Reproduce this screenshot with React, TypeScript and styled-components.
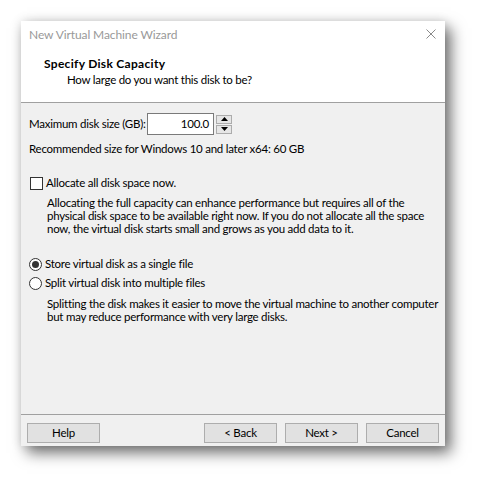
import React from "react";
import styled, { createGlobalStyle } from "styled-components";

const Global = createGlobalStyle`
  html, body { margin: 0; padding: 0; background: #ffffff; }
  body { font-family: Lato, "Noto Sans", sans-serif; font-size: 11.5px; letter-spacing: -0.25px; color: #000; }
`;

const Stage = styled.div`
  padding: 21px 0 0 21px;
  width: 487px;
  height: 489px;
  box-sizing: border-box;
`;

const Dialog = styled.div`
  width: 424px;
  height: 425px;
  background: #f0f0f0;
  display: flex;
  flex-direction: column;
  white-space: nowrap;
  box-shadow: 6px 7px 14px rgba(0, 0, 0, 0.55), 0 0 10px rgba(0, 0, 0, 0.12);
`;

const Header = styled.div`
  background: #ffffff;
  height: 81px;
  border-bottom: 1px solid #a0a0a0;
  display: flex;
  flex-direction: column;
`;

const TitleBar = styled.div`
  display: flex;
  justify-content: space-between;
  align-items: flex-start;
  padding: 6px 9px 0 8px;
  height: 16px;
`;

const Title = styled.div`
  color: #999999;
  font-size: 12px;
  letter-spacing: -0.1px;
  line-height: 16px;
`;

const Close = styled.svg`
  margin-top: 2px;
`;

const Heading = styled.div`
  font-weight: bold;
  font-size: 12px;
  letter-spacing: 0.3px;
  line-height: 16px;
  margin: 13px 0 0 23px;
`;

const SubHeading = styled.div`
  line-height: 16px;
  margin: 0 0 0 46px;
`;

const Body = styled.div`
  flex: 1;
  padding: 10px 8px 0 8px;
  display: flex;
  flex-direction: column;
`;

const SizeRow = styled.div`
  display: flex;
  align-items: center;
  height: 22px;
`;

const Label = styled.span`
  line-height: 16px;
  width: 113px;
  margin-right: 5px;
`;

const NumberBox = styled.div`
  width: 67px;
  height: 22px;
  box-sizing: border-box;
  background: #fff;
  border: 1px solid #7a7a7a;
  text-align: right;
  padding: 2px 4px 0 0;
  line-height: 16px;
`;

const Spinner = styled.div`
  display: flex;
  flex-direction: column;
  gap: 1px;
  margin-left: 2px;
  height: 22px;
  justify-content: center;
`;

const SpinButton = styled.div`
  width: 16px;
  height: 9px;
  box-sizing: border-box;
  background: #e6e6e6;
  border: 1px solid #acacac;
  display: flex;
  align-items: center;
  justify-content: center;
`;

const Text = styled.div<{ $top: number }>`
  line-height: 16px;
  margin-top: ${(p) => p.$top}px;
`;

const Para = styled.div<{ $top: number }>`
  line-height: 13px;
  margin-top: ${(p) => p.$top}px;
  margin-left: 18px;
`;

const Option = styled.div<{ $top: number }>`
  display: flex;
  align-items: center;
  line-height: 16px;
  margin-top: ${(p) => p.$top}px;
`;

const CheckBox = styled.span`
  width: 13px;
  height: 13px;
  box-sizing: border-box;
  border: 1px solid #333;
  background: #fff;
  margin: 0 3px 0 1px;
`;

const Radio = styled.span<{ $on?: boolean }>`
  width: 13px;
  height: 13px;
  box-sizing: border-box;
  border: 1px solid #333;
  border-radius: 50%;
  background: #fff;
  margin: 0 3px 0 0;
  display: flex;
  align-items: center;
  justify-content: center;
  &::after {
    content: "";
    width: 7px;
    height: 7px;
    border-radius: 50%;
    background: ${(p) => (p.$on ? "#333" : "transparent")};
  }
`;

const Footer = styled.div`
  border-top: 1px solid #a0a0a0;
  height: 32px;
  display: flex;
  align-items: flex-start;
  padding: 8px 6px 0 6px;
  box-sizing: border-box;
  gap: 8px;
`;

const Button = styled.div<{ $push?: boolean }>`
  width: 73px;
  height: 20px;
  box-sizing: border-box;
  background: #e1e1e1;
  border: 1px solid #adadad;
  text-align: center;
  line-height: 17px;
  margin-left: ${(p) => (p.$push ? "auto" : "0")};
`;

export default function App() {
  return (
    <>
      <Global />
      <Stage>
        <Dialog>
          <Header>
            <TitleBar>
              <Title>New Virtual Machine Wizard</Title>
              <Close width="10" height="10" viewBox="0 0 10 10">
                <path d="M0.5 0.5 L9.5 9.5 M9.5 0.5 L0.5 9.5" stroke="#8a8a8a" strokeWidth="1" fill="none" />
              </Close>
            </TitleBar>
            <Heading>Specify Disk Capacity</Heading>
            <SubHeading>How large do you want this disk to be?</SubHeading>
          </Header>
          <Body>
            <SizeRow>
              <Label>Maximum disk size (GB):</Label>
              <NumberBox>100.0</NumberBox>
              <Spinner>
                <SpinButton>
                  <svg width="7" height="4" viewBox="0 0 7 4"><path d="M3.5 0 L7 4 L0 4 Z" fill="#000" /></svg>
                </SpinButton>
                <SpinButton>
                  <svg width="7" height="4" viewBox="0 0 7 4"><path d="M0 0 L7 0 L3.5 4 Z" fill="#000" /></svg>
                </SpinButton>
              </Spinner>
            </SizeRow>
            <Text $top={6}>Recommended size for Windows 10 and later x64: 60 GB</Text>
            <Option $top={18}>
              <CheckBox />
              Allocate all disk space now.
            </Option>
            <Para $top={5}>
              Allocating the full capacity can enhance performance but requires all of the
              <br />
              physical disk space to be available right now. If you do not allocate all the space
              <br />
              now, the virtual disk starts small and grows as you add data to it.
            </Para>
            <Option $top={21}>
              <Radio $on />
              Store virtual disk as a single file
            </Option>
            <Option $top={3}>
              <Radio />
              Split virtual disk into multiple files
            </Option>
            <Para $top={6}>
              Splitting the disk makes it easier to move the virtual machine to another computer
              <br />
              but may reduce performance with very large disks.
            </Para>
          </Body>
          <Footer>
            <Button>Help</Button>
            <Button $push>&lt; Back</Button>
            <Button>Next &gt;</Button>
            <Button>Cancel</Button>
          </Footer>
        </Dialog>
      </Stage>
    </>
  );
}
